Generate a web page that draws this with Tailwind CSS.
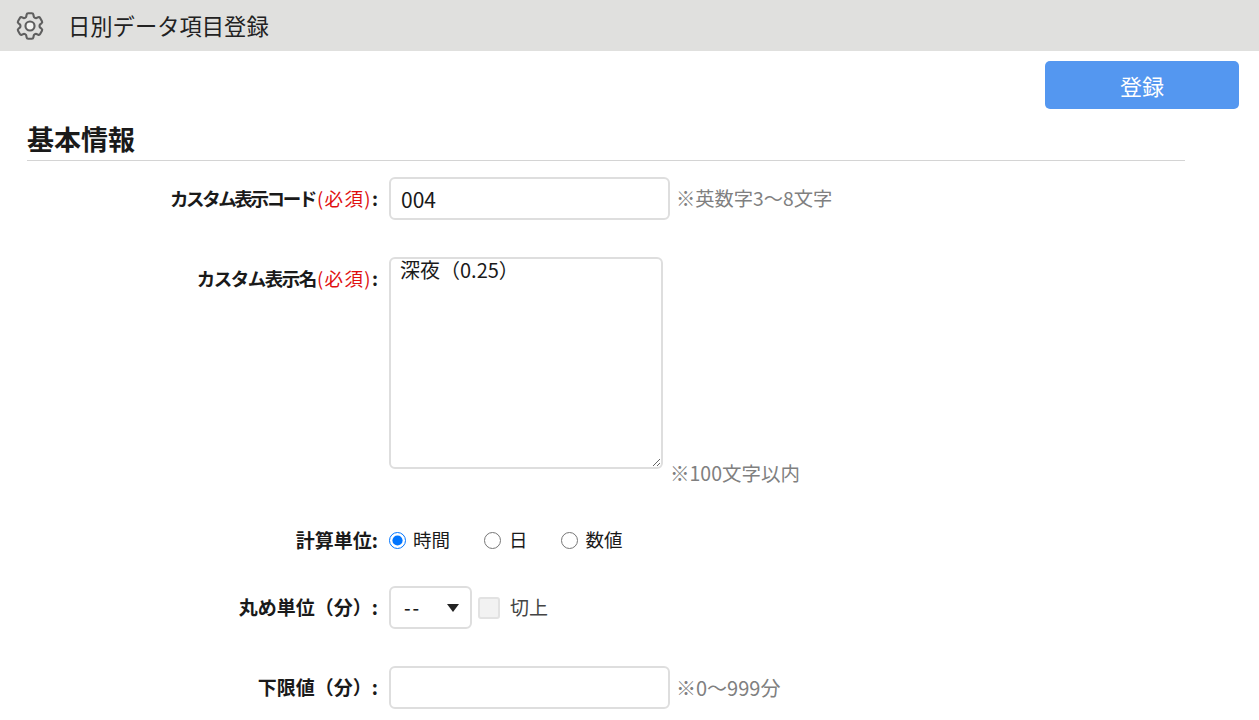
<!DOCTYPE html>
<html lang="ja">
<head>
  <meta charset="UTF-8" />
  <title>日別データ項目登録</title>
  <script src="https://cdn.jsdelivr.net/npm/@tailwindcss/browser@4"></script>
</head>
<body class="bg-white h-[720px] overflow-hidden font-['Noto_Sans_CJK_JP','Noto_Sans',sans-serif] text-[18.5px] text-[#1a1a1a]">

  <!-- Header -->
  <header class="h-[51px] bg-[#e0e0de] flex items-center pl-[13px]">
    <svg class="w-[34px] h-[34px] text-[#5f5f5f]" viewBox="0 0 24 24" fill="none" stroke="currentColor" stroke-width="1.5" stroke-linecap="round" stroke-linejoin="round">
      <path d="M9.594 3.94c.09-.542.56-.94 1.11-.94h2.593c.55 0 1.02.398 1.11.94l.213 1.281c.063.374.313.686.645.87.074.04.147.083.22.127.325.196.72.257 1.075.124l1.217-.456a1.125 1.125 0 0 1 1.37.49l1.296 2.247a1.125 1.125 0 0 1-.26 1.431l-1.003.827c-.293.241-.438.613-.43.992a7.723 7.723 0 0 1 0 .255c-.008.378.137.75.43.991l1.004.827c.424.35.534.955.26 1.43l-1.298 2.247a1.125 1.125 0 0 1-1.369.491l-1.217-.456c-.355-.133-.75-.072-1.076.124a6.47 6.47 0 0 1-.22.128c-.331.183-.581.495-.644.869l-.213 1.281c-.09.543-.56.94-1.11.94h-2.594c-.55 0-1.019-.398-1.11-.94l-.213-1.281c-.062-.374-.312-.686-.644-.87a6.52 6.52 0 0 1-.22-.127c-.325-.196-.72-.257-1.076-.124l-1.217.456a1.125 1.125 0 0 1-1.369-.49l-1.297-2.247a1.125 1.125 0 0 1 .26-1.431l1.004-.827c.292-.24.437-.613.43-.991a6.932 6.932 0 0 1 0-.255c.007-.38-.138-.751-.43-.992l-1.004-.827a1.125 1.125 0 0 1-.26-1.43l1.297-2.247a1.125 1.125 0 0 1 1.37-.491l1.216.456c.356.133.751.072 1.076-.124.072-.044.146-.086.22-.128.332-.183.582-.495.644-.869l.214-1.28Z"/>
      <circle cx="12" cy="12" r="3.2" fill="#f4f4f2"/>
    </svg>
    <h1 class="ml-[21px] text-[22.3px] font-normal text-[#222]">日別データ項目登録</h1>
  </header>

  <!-- Actions -->
  <div class="flex justify-end pt-[10px] pr-[20px]">
    <button class="w-[194px] h-[48px] bg-[#5497f0] text-white text-[22px] rounded-[5px]">登録</button>
  </div>

  <main class="pl-[27px] w-[1185px]">
    <h2 class="h-[52px] pt-[8px] flex items-center text-[27px] leading-none font-bold text-[#1a1a1a] border-b border-[#d4d4d4]">基本情報</h2>

    <form class="mt-[16px]">
      <div class="flex items-center h-[43px]">
        <label class="w-[351px] text-right font-bold"><span class="tracking-[-2.4px] mr-[2px]">カスタム表示コード</span><span class="text-[#e01010] font-normal tracking-[1.4px]">(必須)</span>:</label>
        <input type="text" value="004" class="ml-[11px] w-[281px] h-[43px] px-[10px] border-2 border-[#dedede] rounded-[6px] text-[21px] text-[#1a1a1a]" />
        <span class="ml-[6px] text-[#808080] text-[19.3px]">※英数字3～8文字</span>
      </div>

      <div class="flex items-start mt-[37px]">
        <label class="w-[351px] text-right font-bold mt-[8px]"><span class="tracking-[-1.5px] mr-[1px]">カスタム表示名</span><span class="text-[#e01010] font-normal tracking-[1.4px]">(必須)</span>:</label>
        <textarea class="ml-[11px] w-[274px] h-[212px] px-[9px] py-0 border-2 border-[#dedede] rounded-[6px] text-[20px] leading-[22px] text-[#1a1a1a] resize">深夜（0.25）</textarea>
        <span class="ml-[7px] mt-[201px] h-[30px] text-[#808080] text-[19.5px]">※100文字以内</span>
      </div>

      <div class="flex items-center h-[30px] mt-[37px]">
        <label class="w-[351px] text-right font-bold text-[19px]">計算単位:</label>
        <label class="ml-[11px] flex items-center gap-[7px]"><input type="radio" name="unit" checked class="w-[17px] h-[17px] m-0 accent-[#0075ff]" />時間</label>
        <label class="ml-[34px] flex items-center gap-[8px]"><input type="radio" name="unit" class="w-[17px] h-[17px] m-0" />日</label>
        <label class="ml-[33px] flex items-center gap-[8px]"><input type="radio" name="unit" class="w-[17px] h-[17px] m-0" />数値</label>
      </div>

      <div class="flex items-center h-[43px] mt-[31px]">
        <label class="w-[351px] text-right font-bold text-[19px]">丸め単位（分）:</label>
        <div class="ml-[11px] w-[83px] h-[43px] px-[13px] border-2 border-[#dedede] rounded-[6px] flex items-center justify-between">
          <span class="tracking-[2px] font-medium">--</span>
          <span class="w-0 h-0 mr-[-2px] border-x-[6px] border-x-transparent border-t-[8px] border-t-[#222]"></span>
        </div>
        <input type="checkbox" disabled class="ml-[6px] w-[22px] h-[22px] appearance-none bg-[#f2f2f2] border-2 border-[#e2e2e2] rounded-[3px]" />
        <span class="ml-[10px] text-[#444] text-[19px]">切上</span>
      </div>

      <div class="flex items-center h-[43px] mt-[37px]">
        <label class="w-[351px] text-right font-bold text-[19px]">下限値（分）:</label>
        <input type="text" class="ml-[11px] w-[281px] h-[43px] px-[10px] border-2 border-[#dedede] rounded-[6px]" />
        <span class="ml-[6px] text-[#808080] text-[20px]">※0～999分</span>
      </div>
    </form>
  </main>
</body>
</html>
